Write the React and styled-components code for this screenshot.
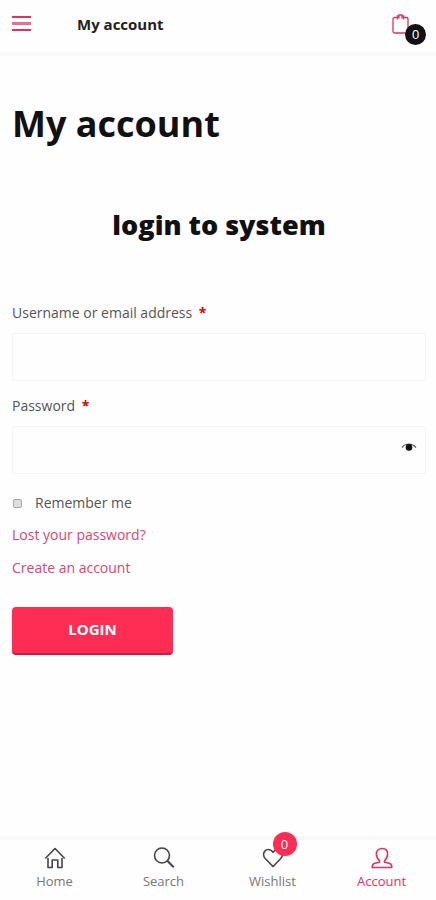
import React, { useState } from "react";
import styled, { createGlobalStyle } from "styled-components";

const GlobalStyle = createGlobalStyle`
  * {
    box-sizing: border-box;
  }
  body {
    margin: 0;
    background: #fefefe;
    color: #555;
    font-family: "Open Sans", "Noto Sans", sans-serif;
    font-size: 14px;
  }
`;

const Page = styled.div`
  min-height: 100vh;
  display: flex;
  flex-direction: column;
`;

const Header = styled.header`
  height: 56px;
  display: flex;
  align-items: center;
  padding: 0 10px 4px 12px;
  border-bottom: 4px solid #f9f9f9;
`;

const IconButton = styled.button`
  position: relative;
  display: flex;
  padding: 0;
  border: none;
  background: none;
  color: #e0315f;
  cursor: pointer;
`;

const HeaderTitle = styled.span`
  flex: 1;
  margin-left: 46px;
  color: #222;
  font-size: 15px;
  font-weight: 700;
`;

const Badge = styled.span`
  position: absolute;
  top: ${(props) => props.$top};
  left: ${(props) => props.$left};
  width: ${(props) => props.$size};
  height: ${(props) => props.$size};
  display: flex;
  align-items: center;
  justify-content: center;
  border-radius: 50%;
  background: ${(props) => props.$color};
  color: #fff;
  font-size: 13px;
`;

const Main = styled.main`
  flex: 1;
  padding: 44px 10px 24px 12px;
`;

const PageTitle = styled.h1`
  margin: 0 0 52px;
  color: #111;
  font-size: 36px;
  font-weight: 700;
  line-height: 48px;
`;

const FormTitle = styled.h2`
  margin: 0 0 52px;
  color: #111;
  font-size: 27px;
  font-weight: 800;
  line-height: 50px;
  text-align: center;
`;

const Form = styled.form`
  display: flex;
  flex-direction: column;
  align-items: flex-start;
`;

const Field = styled.div`
  position: relative;
  width: 100%;
  margin-bottom: 14px;
`;

const Label = styled.label`
  display: block;
  margin-bottom: 9px;
  line-height: 22px;
`;

const Required = styled.span`
  margin-left: 3px;
  color: #e00000;
  font-weight: 700;
`;

const Input = styled.input`
  display: block;
  width: 100%;
  height: 48px;
  padding: 0 40px 0 14px;
  border: 1px solid #f5f5f5;
  border-radius: 2px;
  background: #fefefe;
  color: #333;
  font: inherit;
  &:focus {
    outline: none;
    border-color: #ff2c54;
  }
`;

const ShowButton = styled.button`
  position: absolute;
  right: 9px;
  bottom: 18px;
  display: flex;
  padding: 0;
  border: none;
  background: none;
  color: #111;
  cursor: pointer;
`;

const RememberLabel = styled.label`
  display: flex;
  align-items: center;
  gap: 13px;
  margin: 4px 0 10px;
  line-height: 22px;
`;

const Checkbox = styled.input`
  appearance: none;
  width: 9px;
  height: 9px;
  margin: 0 0 0 1px;
  border: 1px solid #aaa;
  border-radius: 2px;
  background: #ddd;
  &:checked {
    background: #ff2c54;
  }
`;

const TextLink = styled.a`
  margin-bottom: 11px;
  color: #d94870;
  line-height: 22px;
  text-decoration: none;
`;

const LoginButton = styled.button`
  width: 161px;
  height: 48px;
  margin-top: 17px;
  padding: 0 0 2px;
  border: none;
  border-bottom: 2px solid #d9163f;
  border-radius: 4px;
  background: #ff2c54;
  color: #fff;
  font-family: inherit;
  font-size: 15px;
  font-weight: 700;
  cursor: pointer;
`;

const BottomNav = styled.nav`
  position: sticky;
  bottom: 0;
  height: 64px;
  display: grid;
  grid-template-columns: repeat(4, 1fr);
  border-top: 4px solid #f8f8f8;
  background: #fefefe;
`;

const NavItem = styled.a`
  display: flex;
  flex-direction: column;
  align-items: center;
  padding-top: 7px;
  color: ${(props) => (props.$active ? "#e0315f" : "#777")};
  font-size: 13px;
  line-height: 20px;
  text-decoration: none;
`;

const NavIcon = styled.span`
  position: relative;
  display: flex;
  height: 24px;
  color: ${(props) => (props.$active ? "#e0315f" : "#444")};
`;

const LineIcon = ({ children }) => (
  <svg
    width="22"
    height="24"
    viewBox="0 0 22 24"
    fill="none"
    stroke="currentColor"
    strokeWidth="1.6"
    strokeLinejoin="round"
    aria-hidden="true"
  >
    {children}
  </svg>
);

const navItems = [
  {
    label: "Home",
    icon: <path d="M4 11V20.500h4.200V13h5.600v7.500H18V11M1.300 11.500 11 1.500l9.700 10" />,
  },
  {
    label: "Search",
    icon: (
      <>
        <circle cx="9" cy="8.500" r="7.500" />
        <path d="m14.300 13.800 6.400 6.400" strokeWidth="2" />
      </>
    ),
  },
  {
    label: "Wishlist",
    count: 0,
    icon: (
      <path d="M11 19.500 3.200 11.500C1.200 9.300 1 6 2.800 4.100 5 1.700 8.800 1.900 11 5.300c2.200-3.400 6-3.600 8.200-1.200 1.800 1.900 1.600 5.200-.4 7.400z" />
    ),
  },
  {
    label: "Account",
    active: true,
    icon: (
      <path d="M8.500 13.800C6.600 12.200 5.400 9.600 5.400 7.100 5.400 3.700 7.600 1.500 11 1.500s5.600 2.200 5.600 5.600c0 2.500-1.200 5.100-3.100 6.700v1.400l4.700 1.100c1.400.4 2.200 1.200 2.400 2.300l.2 1.900H1.200l.2-1.900c.2-1.100 1-1.900 2.400-2.300l4.700-1.100z" />
    ),
  },
];

const App = () => {
  const [formData, setFormData] = useState({ username: "", password: "" });
  const [remember, setRemember] = useState(false);
  const [showPassword, setShowPassword] = useState(false);

  // Handle input change
  const handleChange = (e) => {
    setFormData({ ...formData, [e.target.name]: e.target.value });
  };

  const handleSubmit = (e) => {
    e.preventDefault();
  };

  return (
    <Page>
      <GlobalStyle />
      <Header>
        <IconButton type="button" aria-label="Menu">
          <svg width="19" height="16" viewBox="0 0 19 16" fill="currentColor">
            <path d="M0 0h19v2H0zM0 13h19v2H0z" />
            <path d="M0 6h19v3H0z" opacity="0.7" />
          </svg>
        </IconButton>
        <HeaderTitle>My account</HeaderTitle>
        <IconButton type="button" aria-label="Cart">
          <svg width="34" height="20" viewBox="0 0 34 20" fill="none" stroke="currentColor" strokeWidth="1.3">
            <path d="M5 3.500H2.500Q1 3.500 1 5V17.500Q1 19 2.500 19h12q1.500 0 1.500-1.500V5q0-1.500-1.500-1.500H12" />
            <path d="M5.500 5.500V2H7V1h3v1h1.500v3.500M7 2v2.500M10 2v2.500" />
          </svg>
          <Badge $top="10px" $left="13px" $size="21px" $color="#111">
            0
          </Badge>
        </IconButton>
      </Header>

      <Main>
        <PageTitle>My account</PageTitle>
        <FormTitle>login to system</FormTitle>
        <Form onSubmit={handleSubmit}>
          <Field>
            <Label htmlFor="username">
              Username or email address <Required>*</Required>
            </Label>
            <Input
              id="username"
              type="text"
              name="username"
              value={formData.username}
              onChange={handleChange}
              required
            />
          </Field>
          <Field>
            <Label htmlFor="password">
              Password <Required>*</Required>
            </Label>
            <Input
              id="password"
              type={showPassword ? "text" : "password"}
              name="password"
              value={formData.password}
              onChange={handleChange}
              required
            />
            <ShowButton type="button" aria-label="Show password" onClick={() => setShowPassword(!showPassword)}>
              <svg width="16" height="16" viewBox="0 0 16 16" fill="none">
                <path d="M1 7.500Q4 4 8 4t7 3.500" stroke="currentColor" strokeWidth="1.200" opacity="0.7" />
                <circle cx="8" cy="7.400" r="3.300" fill="currentColor" />
              </svg>
            </ShowButton>
          </Field>

          <RememberLabel>
            <Checkbox type="checkbox" checked={remember} onChange={(e) => setRemember(e.target.checked)} />
            Remember me
          </RememberLabel>
          <TextLink href="#lost-password">Lost your password?</TextLink>
          <TextLink href="#register">Create an account</TextLink>
          <LoginButton type="submit">LOGIN</LoginButton>
        </Form>
      </Main>

      <BottomNav>
        {navItems.map((item) => (
          <NavItem key={item.label} href={`#${item.label.toLowerCase()}`} $active={item.active}>
            <NavIcon $active={item.active}>
              <LineIcon>{item.icon}</LineIcon>
              {item.count !== undefined && (
                <Badge $top="-15px" $left="11px" $size="24px" $color="#ff2c54">
                  {item.count}
                </Badge>
              )}
            </NavIcon>
            {item.label}
          </NavItem>
        ))}
      </BottomNav>
    </Page>
  );
};

export default App;
